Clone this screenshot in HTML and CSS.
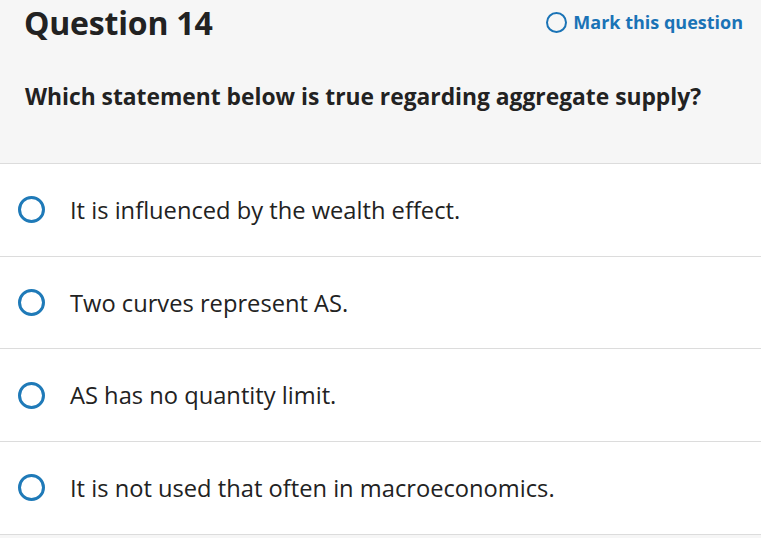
FILE: index.html
```html
<!DOCTYPE html>
<html>
<head>
<meta charset="utf-8">
<link rel="stylesheet" href="styles.css">
</head>
<body>
<div class="header">
  <div class="top">
    <h1 class="title">Question 14</h1>
    <button class="mark"><span class="mark-circle"></span>Mark this question</button>
  </div>
  <p class="prompt">Which statement below is true regarding aggregate supply?</p>
</div>
<ul class="options">
  <li class="option"><span class="radio"></span><span class="label">It is influenced by the wealth effect.</span></li>
  <li class="option"><span class="radio"></span><span class="label">Two curves represent AS.</span></li>
  <li class="option"><span class="radio"></span><span class="label">AS has no quantity limit.</span></li>
  <li class="option"><span class="radio"></span><span class="label">It is not used that often in macroeconomics.</span></li>
</ul>
</body>
</html>
```
FILE: styles.css
```css
* { box-sizing: border-box; }
html, body { margin: 0; padding: 0; }
body { font-family: "Open Sans", "Liberation Sans", sans-serif; color: #222; background: #f6f6f6; }
.header {
  background: #f6f6f6;
  height: 164px;
  border-bottom: 1px solid #dcdcdc;
  padding: 0 18px 0 24px;
}
.top { display: flex; justify-content: space-between; align-items: center; height: 44px; }
.title { margin: 0; font-size: 32px; font-weight: 700; color: #222; letter-spacing: -0.2px; }
.mark {
  display: flex; align-items: center; gap: 6px;
  background: none; border: 0; padding: 0;
  font-family: inherit; font-size: 18px; font-weight: 700; color: #1a73b6;
}
.mark-circle { width: 21px; height: 21px; border: 2px solid #1a73b6; border-radius: 50%; }
.prompt { margin: 38px 0 0 1px; font-size: 22.8px; line-height: 30px; font-weight: 700; color: #222; }
.options { list-style: none; margin: 0; padding: 0; background: #fff; }
.option {
  display: flex; align-items: center; height: 92.7px;
  border-bottom: 1px solid #dcdcdc; padding-left: 18px;
}
.radio { width: 27px; height: 27px; border: 3px solid #1f7ab8; border-radius: 50%; flex: none; }
.label { margin-left: 25px; font-size: 23.7px; line-height: 30px; color: #222; }
```
